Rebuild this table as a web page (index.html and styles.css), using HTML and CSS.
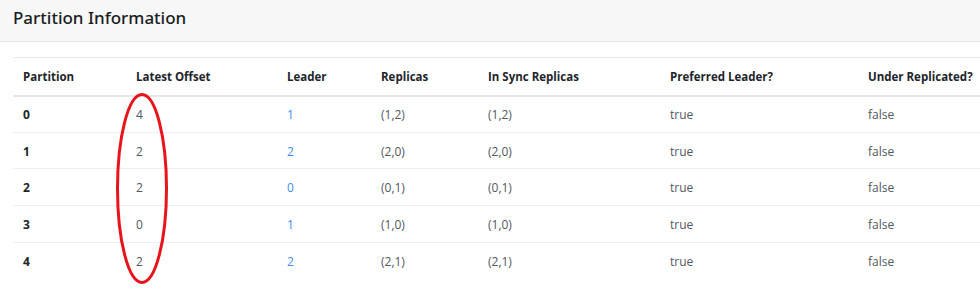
FILE: index.html
```html
<!DOCTYPE html>
<html>
<head>
<meta charset="utf-8">
<link rel="stylesheet" href="styles.css">
</head>
<body>
<div class="card">
  <div class="card-header"><h4 class="card-title">Partition Information</h4></div>
  <div class="card-body">
    <table class="ptable">
      <colgroup>
        <col class="c1"><col class="c2"><col class="c3"><col class="c4"><col class="c5"><col class="c6"><col class="c7">
      </colgroup>
      <thead>
        <tr><th>Partition</th><th>Latest Offset</th><th>Leader</th><th>Replicas</th><th>In Sync Replicas</th><th>Preferred Leader?</th><th>Under Replicated?</th></tr>
      </thead>
      <tbody>
        <tr><td class="pid">0</td><td>4</td><td><a class="lnk">1</a></td><td>(1,2)</td><td>(1,2)</td><td>true</td><td>false</td></tr>
        <tr><td class="pid">1</td><td>2</td><td><a class="lnk">2</a></td><td>(2,0)</td><td>(2,0)</td><td>true</td><td>false</td></tr>
        <tr><td class="pid">2</td><td>2</td><td><a class="lnk">0</a></td><td>(0,1)</td><td>(0,1)</td><td>true</td><td>false</td></tr>
        <tr><td class="pid">3</td><td>0</td><td><a class="lnk">1</a></td><td>(1,0)</td><td>(1,0)</td><td>true</td><td>false</td></tr>
        <tr><td class="pid">4</td><td>2</td><td><a class="lnk">2</a></td><td>(2,1)</td><td>(2,1)</td><td>true</td><td>false</td></tr>
      </tbody>
    </table>
  </div>
</div>
<svg class="mark" width="60" height="200" viewBox="0 0 60 200"><ellipse cx="29" cy="97.5" rx="24.5" ry="94" fill="none" stroke="#e8141c" stroke-width="3"/></svg>
</body>
</html>
```
FILE: styles.css
```css
html, body {
  margin: 0;
  padding: 0;
  background: #fff;
  width: 980px;
  height: 297px;
  overflow: hidden;
  font-family: "Open Sans", "Noto Sans", sans-serif;
  color: #212529;
}
.card {
  width: 980px;
}
.card-header {
  background: #f7f7f7;
  border-bottom: 1px solid #e2e2e2;
  height: 42px;
  box-sizing: border-box;
  padding: 0 13px;
  display: flex;
  align-items: center;
}
.card-title {
  margin: 0;
  font-family: "Noto Sans", "Open Sans", sans-serif;
  font-size: 17px;
  font-weight: 500;
  color: #1a1d21;
  position: relative;
  top: -3px;
}
.card-body {
  padding: 15px 0 0 13px;
}
.ptable {
  border-collapse: collapse;
  table-layout: fixed;
  width: 1000px;
  font-size: 12px;
}
.c1 { width: 113px; }
.c2 { width: 151px; }
.c3 { width: 94px; }
.c4 { width: 107px; }
.c5 { width: 182px; }
.c6 { width: 198px; }
.c7 { width: 155px; }
.ptable th, .ptable td {
  text-align: left;
  padding: 0 10px;
  white-space: nowrap;
}
.ptable thead th {
  font-weight: 700;
  font-size: 11.5px;
  color: #212529;
  height: 38px;
  border-top: 1px solid #e9ecef;
  border-bottom: 2px solid #e3e7eb;
  box-sizing: border-box;
  padding-top: 1px;
}
.ptable tbody td {
  height: 36.7px;
  box-sizing: border-box;
  border-top: 1px solid #eceeef;
  color: #51575d;
  padding-top: 1px;
}
.ptable tbody tr:first-child td { border-top: none; }
.ptable tbody td.pid {
  font-weight: 700;
  color: #212529;
}
.lnk {
  color: #3f8ced;
  text-decoration: none;
}
.mark {
  position: absolute;
  left: 113px;
  top: 91px;
}
```
